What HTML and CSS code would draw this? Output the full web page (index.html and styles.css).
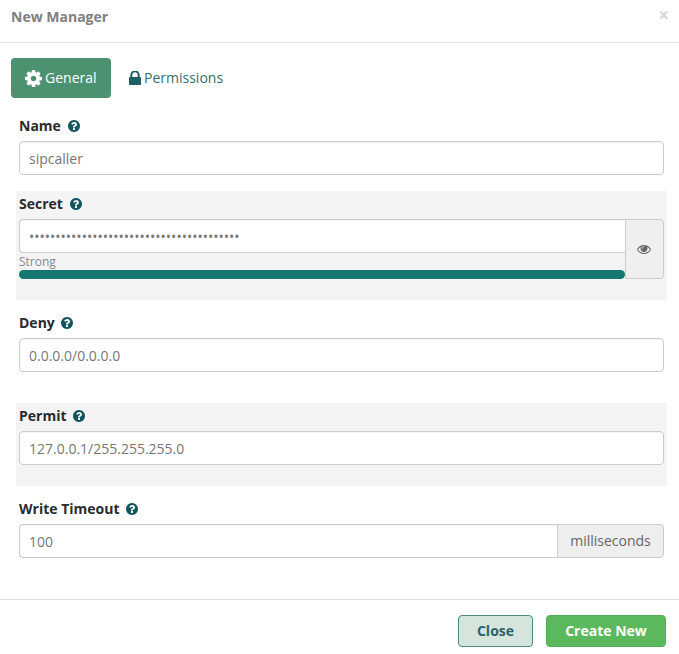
FILE: index.html
```html
<!DOCTYPE html>
<html lang="en">
<head>
<meta charset="utf-8">
<title>New Manager</title>
<link rel="stylesheet" href="styles.css">
</head>
<body>
<svg class="defs" aria-hidden="true">
  <symbol id="i-help" viewBox="128 128 1536 1536"><path d="M1024 1376v-192q0-14-9-23t-23-9h-192q-14 0-23 9t-9 23v192q0 14 9 23t23 9h192q14 0 23-9t9-23zm256-672q0-88-55.5-163t-138.5-116-170-41q-243 0-371 213-15 24 8 42l132 100q7 6 19 6 16 0 25-12 53-68 86-92 34-24 86-24 48 0 85.5 26t37.5 59q0 38-20 61t-68 45q-63 28-115.5 86.5t-52.5 125.5v36q0 14 9 23t23 9h192q14 0 23-9t9-23q0-19 21.5-49.5t54.5-49.5q32-18 49-28.5t46-35 44.5-48 28-60.5 12.5-81zm384 192q0 209-103 385.5t-279.5 279.5-385.5 103-385.5-103-279.5-279.5-103-385.5 103-385.5 279.5-279.5 385.5-103 385.5 103 279.5 279.5 103 385.5z"/></symbol>
</svg>
<div class="modal">
  <header class="modal-head">
    <h1 class="modal-title">New Manager</h1>
    <span class="modal-x">×</span>
  </header>
  <nav class="tabs">
    <a class="tab tab-active">
      <svg class="tab-icon tab-gear" viewBox="128 128 1536 1536"><path d="M1152 896q0-106-75-181t-181-75-181 75-75 181 75 181 181 75 181-75 75-181zm512-109v222q0 12-8 23t-20 13l-185 28q-19 54-39 91 35 50 107 138 10 12 10 25t-9 23q-27 37-99 108t-94 71q-12 0-26-9l-138-108q-44 23-91 38-16 136-29 186-7 28-36 28h-222q-14 0-24.5-8.5t-11.5-21.5l-28-184q-49-16-90-37l-141 107q-10 9-25 9-14 0-25-11-126-114-165-168-7-10-7-23 0-12 8-23 15-21 51-66.5t54-70.5q-27-50-41-99l-183-27q-13-2-21-12.5t-8-23.5v-222q0-12 8-23t19-13l186-28q14-46 39-92-40-57-107-138-10-12-10-24 0-10 9-23 26-36 98.5-107.5t94.5-71.5q13 0 26 10l138 107q44-23 91-38 16-136 29-186 7-28 36-28h222q14 0 24.5 8.5t11.5 21.5l28 184q49 16 90 37l142-107q9-9 24-9 13 0 25 10 129 119 165 170 7 8 7 22 0 12-8 23-15 21-51 66.5t-54 70.5q26 50 41 98l183 28q13 2 21 12.5t8 23.5z"/></svg>
      <span class="tab-text">General</span>
    </a>
    <a class="tab tab-perm">
      <svg class="tab-icon tab-lock" viewBox="320 192 1152 1344"><path d="M640 768h512v-192q0-106-75-181t-181-75-181 75-75 181v192zm832 96v576q0 40-28 68t-68 28h-960q-40 0-68-28t-28-68v-576q0-40 28-68t68-28h32v-192q0-184 132-316t316-132 316 132 132 316v192h32q40 0 68 28t28 68z"/></svg>
      <span class="tab-text">Permissions</span>
    </a>
  </nav>
  <form class="form">
    <div class="group group-first">
      <label class="label">Name <svg class="help"><use href="#i-help"/></svg></label>
      <input class="input" type="text" value="sipcaller">
    </div>
    <div class="group group-shaded">
      <label class="label">Secret <svg class="help"><use href="#i-help"/></svg></label>
      <div class="secret">
        <div class="secret-main">
          <input class="input input-pass" type="password" value="aaaaaaaaaaaaaaaaaaaaaaaaaaaaaaaaaaaaaaaa">
          <div class="strength">Strong</div>
          <div class="bar"></div>
        </div>
        <button class="eye" type="button">
          <svg class="eye-icon" viewBox="0 256 1792 1280"><path d="M1664 960q-152-236-381-353 61 104 61 225 0 185-131.5 316.5t-316.5 131.5-316.5-131.5-131.5-316.5q0-121 61-225-229 117-381 353 133 205 333.5 326.5t434.5 121.5 434.5-121.5 333.5-326.5zm-720-384q0-20-14-34t-34-14q-125 0-214.5 89.5t-89.5 214.5q0 20 14 34t34 14 34-14 14-34q0-86 61-147t147-61q20 0 34-14t14-34zm848 384q0 34-20 69-140 230-376.5 368.5t-499.5 138.5-499.5-139-376.5-368q-20-35-20-69t20-69q140-229 376.5-368t499.5-139 499.5 139 376.5 368q20 35 20 69z"/></svg>
        </button>
      </div>
    </div>
    <div class="group">
      <label class="label">Deny <svg class="help"><use href="#i-help"/></svg></label>
      <input class="input" type="text" value="0.0.0.0/0.0.0.0">
    </div>
    <div class="group group-shaded">
      <label class="label">Permit <svg class="help"><use href="#i-help"/></svg></label>
      <input class="input" type="text" value="127.0.0.1/255.255.255.0">
    </div>
    <div class="group">
      <label class="label">Write Timeout <svg class="help"><use href="#i-help"/></svg></label>
      <div class="input-group">
        <input class="input input-joined" type="text" value="100">
        <span class="addon">milliseconds</span>
      </div>
    </div>
  </form>
  <footer class="modal-foot">
    <button class="btn btn-close" type="button">Close</button>
    <button class="btn btn-create" type="button">Create New</button>
  </footer>
</div>
</body>
</html>
```
FILE: styles.css
```css
* { box-sizing: border-box; }
html, body { margin: 0; padding: 0; background: #fff; }
body {
  font-family: "Open Sans", "Noto Sans", sans-serif;
  font-size: 14px;
  color: #555;
  height: 654px;
  overflow: hidden;
}
.defs { display: none; }
.modal { width: 679px; height: 654px; display: flex; flex-direction: column; }

.modal-head {
  height: 43px;
  border-bottom: 1px solid #e2e2e2;
  padding: 0 11px;
  display: flex;
  align-items: flex-start;
  justify-content: space-between;
}
.modal-title {
  margin: 7px 0 0;
  font-size: 14px;
  line-height: 20px;
  font-weight: 700;
  color: #808080;
}
.modal-x {
  font-size: 19px;
  font-weight: 700;
  line-height: 20px;
  margin: 5px -1px 0 0;
  color: #d8d8d8;
}

.tabs { display: flex; gap: 4px; padding: 15px 0 0 11px; }
.tab {
  height: 40px;
  display: flex;
  align-items: center;
  gap: 3px;
  padding: 0 14px;
  border-radius: 4px;
  color: #356e70;
  font-size: 14px;
}
.tab-text { padding-bottom: 2px; }
.tab-active { background: #4c9270; color: #fff; width: 100px; }
.tab-icon { fill: currentColor; display: block; flex: none; }
.tab-gear { width: 17px; height: 17px; }
.tab-lock { width: 12px; height: 14px; fill: #1d5f62; }

.form { padding: 15px 12px 0 16px; }
.group { padding: 3px 3px 21px; margin-bottom: 10px; }
.group-first { padding-bottom: 16px; margin-bottom: 0; }
.group-shaded { background: #f4f4f4; }

.label {
  display: block;
  height: 20px;
  line-height: 20px;
  margin-bottom: 5px;
  font-weight: 700;
  font-size: 14px;
  color: #2b2b2b;
}
.help {
  width: 12px;
  height: 12px;
  fill: #11565c;
  margin-left: 3px;
  vertical-align: -1px;
}
.input {
  display: block;
  width: 100%;
  height: 34px;
  padding: 0 9px;
  border: 1px solid #ccc;
  border-radius: 4px;
  background: #fff;
  color: #777;
  font: 14px "Open Sans", "Noto Sans", sans-serif;
  box-shadow: inset 0 1px 1px rgba(0, 0, 0, .05);
  outline: none;
}

.secret { display: flex; }
.secret-main { flex: 1; min-width: 0; }
.input-pass { border-radius: 4px 0 0 4px; border-right: 0; }
.strength {
  height: 17px;
  font-size: 12px;
  line-height: 18px;
  color: #8a8a8a;
}
.bar { height: 9px; border-radius: 5px; background: #15776f; }
.eye {
  width: 39px;
  padding: 0 2px 0 0;
  border: 1px solid #ccc;
  border-radius: 0 4px 4px 0;
  background: #efefef;
  display: flex;
  align-items: center;
  justify-content: center;
}
.eye-icon { width: 14px; height: 10px; fill: #666; display: block; }

.input-group { display: flex; }
.input-joined { flex: 1; min-width: 0; border-radius: 4px 0 0 4px; border-right: 0; }
.addon {
  width: 107px;
  height: 34px;
  line-height: 32px;
  text-align: center;
  border: 1px solid #ccc;
  border-radius: 0 4px 4px 0;
  background: #eee;
  color: #666;
  font-size: 14px;
}

.modal-foot {
  margin-top: auto;
  height: 55px;
  border-top: 1px solid #e2e2e2;
  padding: 15px 13px 0 0;
  display: flex;
  justify-content: flex-end;
  gap: 13px;
}
.btn {
  height: 32px;
  border-radius: 4px;
  font: 700 14px "Open Sans", "Noto Sans", sans-serif;
  padding: 0 0 2px;
}
.btn-close {
  width: 75px;
  background: #d6e4de;
  border: 1px solid #4c8a80;
  color: #2a6468;
}
.btn-create {
  width: 120px;
  background: #5cb85c;
  border: 1px solid #53ad58;
  color: #fff;
}
```
